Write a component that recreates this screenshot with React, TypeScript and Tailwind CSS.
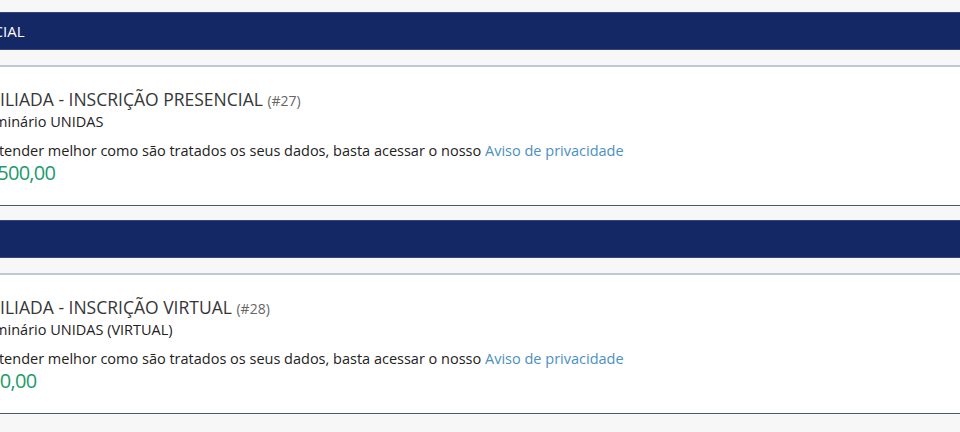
import React from "react"

type Ticket = {
  header: string
  title: string
  code: string
  event: string
  price: string
  shifts: { header: string; title: string; event: string; body: string; price: string }
}

const tickets: Ticket[] = [
  {
    header: "INSCRIÇÃO PRESENCIAL",
    title: "AFILIADA - INSCRIÇÃO PRESENCIAL",
    code: "(#27)",
    event: "Seminário UNIDAS",
    price: "R$ 1.500,00",
    shifts: {
      header: "-ml-[142px]",
      title: "-ml-[20px]",
      event: "-ml-[22px]",
      body: "-ml-[18px]",
      price: "-ml-[45px]",
    },
  },
  {
    header: "INSCRIÇÃO VIRTUAL",
    title: "AFILIADA - INSCRIÇÃO VIRTUAL",
    code: "(#28)",
    event: "Seminário UNIDAS (VIRTUAL)",
    price: "R$ 0,00",
    shifts: {
      header: "-ml-[142px]",
      title: "-ml-[20px]",
      event: "-ml-[22px]",
      body: "-ml-[18px]",
      price: "-ml-[27px]",
    },
  },
]

const TicketCard = ({ ticket, first }: { ticket: Ticket; first: boolean }) => (
  <section className={first ? "" : "mt-[14px]"}>
    <div className="flex h-[38px] items-center border-y border-[#34457a] bg-[#152866] text-[15px] text-white">
      <span className={`whitespace-nowrap ${ticket.shifts.header}`}>{ticket.header}</span>
    </div>

    <div className="mt-[15px] border-t-2 border-b border-t-[#c3c7cf] border-b-[#4d566f] bg-white pt-[21px] pb-[20px]">
      <div className={`whitespace-nowrap text-[17.5px] leading-[22px] text-[#363636] ${ticket.shifts.title}`}>
        {ticket.title} <span className="text-[14px] text-[#666]">{ticket.code}</span>
      </div>
      <div className={`whitespace-nowrap text-[14.5px] leading-[19px] text-[#222] ${ticket.shifts.event}`}>
        {ticket.event}
      </div>
      <div className={`mt-[10px] whitespace-nowrap text-[14.5px] leading-[20px] text-[#222] ${ticket.shifts.body}`}>
        Entender melhor como são tratados os seus dados, basta acessar o nosso{" "}
        <a href="#" className="text-[#4b8fc3]">
          Aviso de privacidade
        </a>
      </div>
      <div className={`whitespace-nowrap text-[20px] leading-[24px] tracking-[-0.7px] text-[#1e9a6d] ${ticket.shifts.price}`}>
        {ticket.price}
      </div>
    </div>
  </section>
)

export default function App() {
  return (
    <div className="h-[432px] overflow-hidden bg-[#f7f7f7] pt-3 font-['Open_Sans',sans-serif]">
      {tickets.map((ticket, index) => (
        <TicketCard key={ticket.code} ticket={ticket} first={index === 0} />
      ))}
    </div>
  )
}
